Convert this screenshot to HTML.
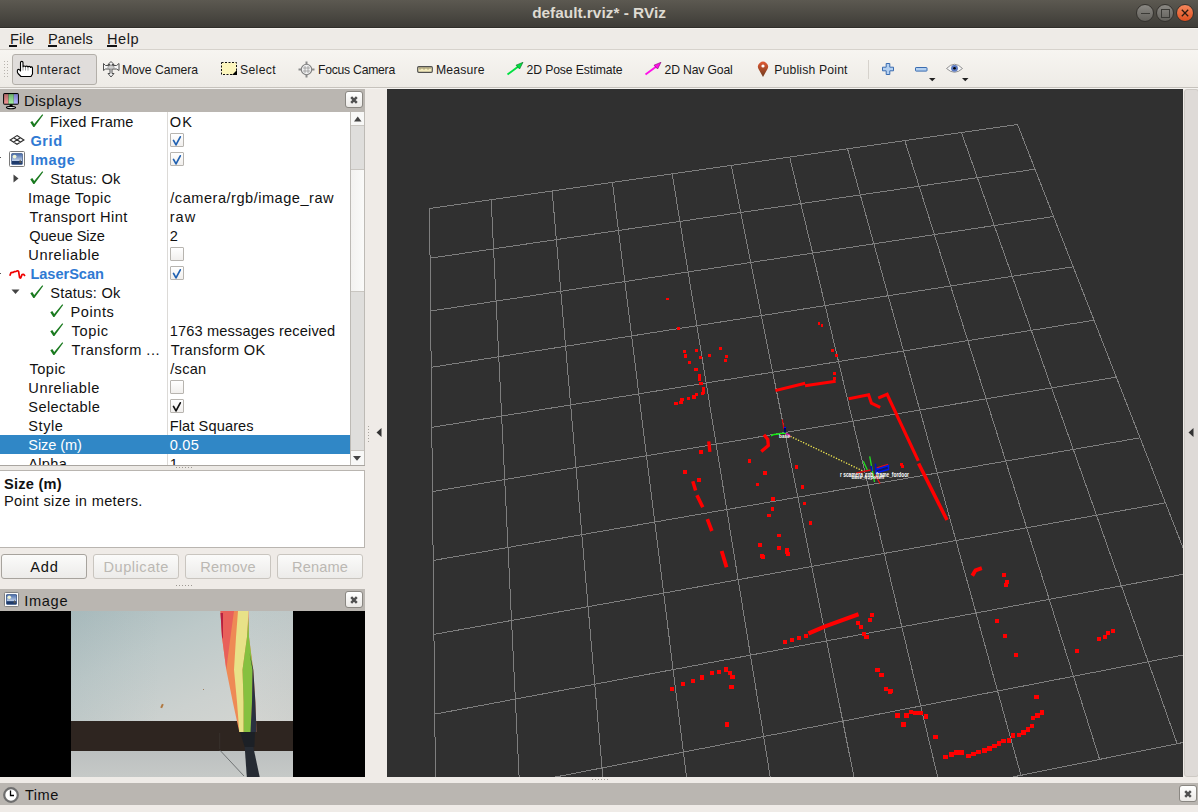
<!DOCTYPE html><html><head><meta charset="utf-8"><style>
*{box-sizing:border-box}
html,body{margin:0;padding:0}
body{width:1198px;height:812px;overflow:hidden;position:relative;background:#efebe7;font-family:"Liberation Sans", sans-serif;color:#111}
.a{position:absolute}
.t{position:absolute;white-space:nowrap;line-height:19px}
</style></head><body><div class="a" style="left:0;top:0;width:1198px;height:28px;background:linear-gradient(#5c5951,#3e3c37);border-bottom:1px solid #302e2a"></div>
<div class="t" style="left:0;top:4px;width:1198px;text-align:center;font-weight:bold;font-size:15.4px;color:#dfdbd2;line-height:18px">default.rviz* - RViz</div>
<div class="a" style="left:1136px;top:4px;width:18px;height:18px;border-radius:50%;background:linear-gradient(#8a8883,#62605b);border:1px solid #34322e"><div class="a" style="left:3.5px;top:7.5px;width:9px;height:1.5px;background:#3b3a36"></div></div>
<div class="a" style="left:1156px;top:4px;width:18px;height:18px;border-radius:50%;background:linear-gradient(#8a8883,#62605b);border:1px solid #34322e"><div class="a" style="left:3.5px;top:4px;width:9px;height:9px;border:1.5px solid #3b3a36"></div></div>
<div class="a" style="left:1176px;top:4px;width:18px;height:18px;border-radius:50%;background:linear-gradient(#f5875c,#df5020);border:1px solid #34322e"><svg class="a" style="left:0;top:0" width="16" height="16"><path d="M4.8 4.8L11.2 11.2M11.2 4.8L4.8 11.2" stroke="#2a1a10" stroke-width="1.3"/><circle cx="8" cy="8" r="1" fill="#2a1a10"/></svg></div>
<div class="a" style="left:0;top:28px;width:1198px;height:1px;background:#f7f4ef"></div>
<div class="a" style="left:0;top:29px;width:1198px;height:20px;background:#eeebe7"></div>
<div class="a" style="left:0;top:49px;width:1198px;height:1px;background:#d6d2cc"></div>
<div class="t" style="left:10px;top:30px;font-size:14.6px;letter-spacing:0.2px;line-height:19px;color:#1a1a1a">File</div>
<div class="t" style="left:48px;top:30px;font-size:14.6px;letter-spacing:0.05px;line-height:19px;color:#1a1a1a">Panels</div>
<div class="t" style="left:107px;top:30px;font-size:14.6px;letter-spacing:0.5px;line-height:19px;color:#1a1a1a">Help</div>
<div class="a" style="left:9px;top:45px;width:8px;height:2px;background:#111"></div>
<div class="a" style="left:48px;top:45px;width:9px;height:2px;background:#111"></div>
<div class="a" style="left:107px;top:45px;width:10px;height:2px;background:#111"></div>
<div class="a" style="left:0;top:50px;width:1198px;height:37px;background:linear-gradient(#f7f5f1,#eeebe6)"></div>
<div class="a" style="left:0;top:87px;width:1198px;height:1px;background:#c6c2bc"></div>
<div class="a" style="left:0;top:88px;width:1198px;height:1px;background:#f5f3f0"></div>
<div class="a" style="left:4px;top:61px;width:1px;height:1px;background:#b8b4ae"></div>
<div class="a" style="left:7px;top:61px;width:1px;height:1px;background:#b8b4ae"></div>
<div class="a" style="left:4px;top:64px;width:1px;height:1px;background:#b8b4ae"></div>
<div class="a" style="left:7px;top:64px;width:1px;height:1px;background:#b8b4ae"></div>
<div class="a" style="left:4px;top:67px;width:1px;height:1px;background:#b8b4ae"></div>
<div class="a" style="left:7px;top:67px;width:1px;height:1px;background:#b8b4ae"></div>
<div class="a" style="left:4px;top:70px;width:1px;height:1px;background:#b8b4ae"></div>
<div class="a" style="left:7px;top:70px;width:1px;height:1px;background:#b8b4ae"></div>
<div class="a" style="left:4px;top:73px;width:1px;height:1px;background:#b8b4ae"></div>
<div class="a" style="left:7px;top:73px;width:1px;height:1px;background:#b8b4ae"></div>
<div class="a" style="left:4px;top:76px;width:1px;height:1px;background:#b8b4ae"></div>
<div class="a" style="left:7px;top:76px;width:1px;height:1px;background:#b8b4ae"></div>
<div class="a" style="left:12px;top:54px;width:85px;height:31px;border:1px solid #b3afa9;border-radius:3px;background:#e0dddb"></div>
<div class="t" style="left:36.3px;top:61px;font-size:12.2px;letter-spacing:0.45px;line-height:19px;color:#1a1a1a">Interact</div>
<div class="t" style="left:122px;top:61px;font-size:12.2px;letter-spacing:-0.05px;line-height:19px;color:#1a1a1a">Move Camera</div>
<div class="t" style="left:240px;top:61px;font-size:12.2px;letter-spacing:0.34px;line-height:19px;color:#1a1a1a">Select</div>
<div class="t" style="left:318px;top:61px;font-size:12.2px;letter-spacing:-0.25px;line-height:19px;color:#1a1a1a">Focus Camera</div>
<div class="t" style="left:436px;top:61px;font-size:12.2px;letter-spacing:0.2px;line-height:19px;color:#1a1a1a">Measure</div>
<div class="t" style="left:526.5px;top:61px;font-size:12.2px;letter-spacing:-0.1px;line-height:19px;color:#1a1a1a">2D Pose Estimate</div>
<div class="t" style="left:664.5px;top:61px;font-size:12.2px;letter-spacing:-0.15px;line-height:19px;color:#1a1a1a">2D Nav Goal</div>
<div class="t" style="left:774.3px;top:61px;font-size:12.2px;letter-spacing:0.17px;line-height:19px;color:#1a1a1a">Publish Point</div>
<svg class="a" style="left:17px;top:61px;overflow:visible" width="17" height="17" viewBox="0 0 17 17" ><path d="M3.5 10V1.6C3.5 0 6 0 6 1.6V6C6 4.6 8.5 4.6 8.5 6C8.5 4.8 11 4.8 11 6.2C11 5 13.5 5 13.5 6.5C13.5 5.6 15.5 5.6 15.5 7V13L14 15.5H4L1 12.5C0.2 11.5 0 9 1 8.5C2 8 3 9 3.5 10Z" fill="#fff" stroke="#000" stroke-width="1.1" stroke-linejoin="round"/><path d="M6 6.5v3M8.5 6.5v3M11 6.8v2.8" stroke="#888" stroke-width="0.8"/></svg>
<svg class="a" style="left:103px;top:61px;overflow:visible" width="17" height="17" viewBox="0 0 17 17" ><path d="M8 0.5L11 3.5H9V4.5H13.5L16 2.5V9.5L13.5 8H9V12.5H11L8 16L5 12.5H7V8H2.5L0.5 9.5V2.5L2.5 4.5H7V3.5H5Z" fill="#f6f6f6" stroke="#505050" stroke-width="1" stroke-linejoin="round"/><ellipse cx="8" cy="6.3" rx="3.2" ry="1.9" fill="#cfcfcf" stroke="#888" stroke-width="0.7"/></svg>
<svg class="a" style="left:221px;top:62px;overflow:visible" width="16" height="13" viewBox="0 0 16 13" ><rect x="0.5" y="0.5" width="15" height="12" fill="#fdf6bd" stroke="#111" stroke-width="1" stroke-dasharray="2 1.5"/><path d="M16 8L16 13L11 13Z" fill="#000"/></svg>
<svg class="a" style="left:298px;top:61px;overflow:visible" width="17" height="17" viewBox="0 0 17 17" ><path d="M8.5 0.5V4M8.5 13V16.5M0.5 8.5H4M13 8.5H16.5" stroke="#8a8a8a" stroke-width="2"/><circle cx="8.5" cy="8.5" r="5.2" fill="#f0f0f0" stroke="#808080" stroke-width="1.1"/><path d="M5 7h7M5 10h7M7 5v7M10 5v7" stroke="#9a9a9a" stroke-width="0.8"/></svg>
<svg class="a" style="left:417px;top:66px;overflow:visible" width="16" height="7" viewBox="0 0 16 7" ><rect x="0.7" y="0.7" width="14.6" height="5.6" rx="1" fill="#f4ebbc" stroke="#505050" stroke-width="1.2"/><path d="M3 1.3v2.2M5 1.3v1.5M7 1.3v2.2M9 1.3v1.5M11 1.3v2.2M13 1.3v1.5" stroke="#5a5030" stroke-width="0.8"/></svg>
<svg class="a" style="left:506px;top:61px;overflow:visible" width="18" height="15" viewBox="0 0 18 15" ><path d="M1.5 13.5L13 5" stroke="#00e040" stroke-width="1.9"/><path d="M17 1.3L10 4.2L13.6 8Z" fill="#00e040" stroke="#086820" stroke-width="0.6"/></svg>
<svg class="a" style="left:644px;top:61px;overflow:visible" width="18" height="15" viewBox="0 0 18 15" ><path d="M1.5 13.5L13 5" stroke="#ff10e8" stroke-width="1.9"/><path d="M17 1.3L10 4.2L13.6 8Z" fill="#ff10e8" stroke="#800870" stroke-width="0.6"/></svg>
<svg class="a" style="left:757px;top:61px;overflow:visible" width="12" height="17" viewBox="0 0 12 17" ><defs><linearGradient id="pg" x1="0" y1="0" x2="0" y2="1"><stop offset="0" stop-color="#e05a35"/><stop offset="1" stop-color="#6e3a1c"/></linearGradient></defs><path d="M6 16L1.8 8.5A5 5 0 1 1 10.2 8.5Z" fill="url(#pg)"/><circle cx="6" cy="5" r="1.6" fill="#fff"/></svg>
<div class="a" style="left:868px;top:60px;width:1px;height:19px;background:#d6d2cc"></div>
<svg class="a" style="left:882px;top:63px;overflow:visible" width="12" height="12" viewBox="0 0 12 12" ><path d="M4.2 0.5H7.8V4.2H11.5V7.8H7.8V11.5H4.2V7.8H0.5V4.2H4.2Z" fill="#b4d0f0" stroke="#3a6cb0" stroke-width="1"/></svg>
<svg class="a" style="left:915px;top:66.5px;overflow:visible" width="12" height="5" viewBox="0 0 12 5" ><rect x="0.5" y="0.5" width="11.5" height="3.6" rx="0.6" fill="#b4d0f0" stroke="#3a6cb0" stroke-width="1"/></svg>
<svg class="a" style="left:929px;top:78px;overflow:visible" width="7" height="4" viewBox="0 0 7 4" ><path d="M0 0H6.5L3.25 3.2Z" fill="#222"/></svg>
<svg class="a" style="left:946px;top:63px;overflow:visible" width="17" height="11" viewBox="0 0 17 11" ><path d="M0.5 5.5Q8.5 -3 16.5 5.5Q8.5 13 0.5 5.5Z" fill="#f4f4f4" stroke="#888" stroke-width="0.9"/><circle cx="8.5" cy="5.3" r="3.4" fill="#5a78c0"/><circle cx="8.5" cy="5.3" r="1.3" fill="#000"/></svg>
<svg class="a" style="left:962px;top:78px;overflow:visible" width="7" height="4" viewBox="0 0 7 4" ><path d="M0 0H6.5L3.25 3.2Z" fill="#222"/></svg>
<div class="a" style="left:0;top:89px;width:365px;height:23px;background:#bab6b1"></div>
<div class="t" style="left:24px;top:92px;font-size:14.6px;letter-spacing:0.36px;color:#111">Displays</div>
<svg class="a" style="left:3px;top:92px;overflow:visible" width="17" height="18" viewBox="0 0 17 18" ><defs><linearGradient id="dr" x1="0" y1="0" x2="0" y2="1"><stop offset="0" stop-color="#b06868"/><stop offset="1" stop-color="#f29696"/></linearGradient><linearGradient id="dg" x1="0" y1="0" x2="0" y2="1"><stop offset="0" stop-color="#6cae6c"/><stop offset="1" stop-color="#a6f2a6"/></linearGradient><linearGradient id="db" x1="0" y1="0" x2="0" y2="1"><stop offset="0" stop-color="#7c7cc8"/><stop offset="1" stop-color="#b4b4ff"/></linearGradient></defs><rect x="0.1" y="1.1" width="15.8" height="11.6" rx="1.6" fill="#000"/><rect x="1.1" y="2.1" width="4.4" height="9.6" fill="url(#dr)"/><rect x="5.5" y="2.1" width="5.3" height="9.6" fill="url(#dg)"/><rect x="10.8" y="2.1" width="4.1" height="9.6" fill="url(#db)"/><path d="M6.9 12.5H9.3L9.9 14.4H6.3Z" fill="#000"/><ellipse cx="8" cy="15.6" rx="4.6" ry="1.2" fill="#eee" stroke="#000" stroke-width="1.1"/></svg>
<div class="a" style="left:345px;top:91px;width:18px;height:17px;border:1px solid #8a8782;border-radius:3px;background:linear-gradient(#ffffff,#ebe9e6)"></div>
<svg class="a" style="left:350px;top:96px;overflow:visible" width="8" height="8" viewBox="0 0 8 8" ><path d="M1.2 1.2L6.8 6.8M6.8 1.2L1.2 6.8" stroke="#505050" stroke-width="2.5" stroke-linecap="butt"/></svg>
<div class="a" style="left:0;top:112px;width:351px;height:353px;background:#fff"></div>
<div class="a" style="left:167px;top:112px;width:1px;height:353px;background:#dcdad7"></div>
<div class="a" style="left:0;top:465px;width:365px;height:1px;background:#a9a5a0"></div>
<div class="a" style="left:350px;top:112px;width:15px;height:353px;background:#dfdedc;border-left:1px solid #bdbab5;border-right:1px solid #bdbab5"></div>
<div class="a" style="left:351px;top:112px;width:13px;height:14px;background:#f8f8f7;border-bottom:1px solid #c9c6c1"></div>
<svg class="a" style="left:354px;top:116px;overflow:visible" width="8" height="6" viewBox="0 0 8 6" ><path d="M0 5.5H7.5L3.75 0.5Z" fill="#444"/></svg>
<div class="a" style="left:351px;top:169px;width:13px;height:123px;background:linear-gradient(90deg,#f3f2f0,#fafaf9);border-top:1px solid #c9c6c1;border-bottom:1px solid #c9c6c1"></div>
<div class="a" style="left:351px;top:450px;width:13px;height:15px;background:#f8f8f7;border-top:1px solid #c9c6c1"></div>
<svg class="a" style="left:353px;top:456px;overflow:visible" width="8" height="5" viewBox="0 0 8 5" ><path d="M0 0H8L4 4.8Z" fill="#444"/></svg>
<div class="a" style="left:0;top:435px;width:350px;height:19px;background:#3087c6"></div>
<svg class="a" style="left:30px;top:113.5px;overflow:visible" width="14" height="14" viewBox="0 0 14 14" ><path d="M0.3 8.3L2.3 7.1L4.2 9.9L12.3 0.3L13.2 0.9L4.4 12.9L3.3 12.9Z" fill="#1a7a1f"/></svg>
<div class="t" style="left:50px;top:113px;font-size:14.6px;letter-spacing:0.15px;color:#111">Fixed Frame</div>
<div class="t" style="left:169.7px;top:113px;font-size:14.6px;letter-spacing:1.1px;color:#111">OK</div>
<svg class="a" style="left:10px;top:135px;overflow:visible" width="15" height="11" viewBox="0 0 15 11" ><path d="M7 0.6L13.9 4.9L7 9.2L0.2 4.9Z M3.6 2.75L10.45 7.05 M10.45 2.75L3.6 7.05" fill="none" stroke="#303030" stroke-width="1.15"/></svg>
<div class="t" style="left:30.4px;top:132px;font-size:14.6px;font-weight:bold;letter-spacing:0.6px;color:#2f7ad3">Grid</div>
<div class="a" style="left:170px;top:133px;width:14px;height:14px;border:1px solid #b7b4af;border-radius:1px;background:linear-gradient(#ffffff,#f1efed)"></div>
<svg class="a" style="left:172px;top:134.5px;overflow:visible" width="10" height="11" viewBox="0 0 10 11" ><path d="M1.5 5.4L4 9.9L8.3 1.8" fill="none" stroke="#2262b2" stroke-width="1.7" stroke-linejoin="round" stroke-linecap="round"/></svg>
<svg class="a" style="left:9px;top:151px;overflow:visible" width="16" height="16" viewBox="0 0 16 16" ><defs><linearGradient id="sk" x1="0" y1="0" x2="0" y2="1"><stop offset="0" stop-color="#4a6ca8"/><stop offset="1" stop-color="#c4d4ec"/></linearGradient></defs><rect x="0.5" y="0.5" width="15" height="15" rx="1" fill="#fdfdfd" stroke="#7a7a7a" stroke-width="1"/><rect x="2.3" y="2.3" width="11.4" height="11.4" rx="1.2" fill="#24457c"/><rect x="3" y="3" width="10" height="7" fill="url(#sk)"/><circle cx="5.6" cy="5.6" r="1.9" fill="#fcffd8" opacity="0.9"/><path d="M3 10h10v2.6H3z" fill="#1e3a6a"/><path d="M10 12L11 8.2L13 12Z" fill="#555"/></svg>
<div class="t" style="left:30.4px;top:151px;font-size:14.6px;font-weight:bold;letter-spacing:0.55px;color:#2f7ad3">Image</div>
<div class="a" style="left:170px;top:152px;width:14px;height:14px;border:1px solid #b7b4af;border-radius:1px;background:linear-gradient(#ffffff,#f1efed)"></div>
<svg class="a" style="left:172px;top:153.5px;overflow:visible" width="10" height="11" viewBox="0 0 10 11" ><path d="M1.5 5.4L4 9.9L8.3 1.8" fill="none" stroke="#2262b2" stroke-width="1.7" stroke-linejoin="round" stroke-linecap="round"/></svg>
<svg class="a" style="left:13px;top:174px;overflow:visible" width="6" height="9" viewBox="0 0 6 9" ><path d="M0.5 0.5L5.5 4.5L0.5 8.5Z" fill="#444"/></svg>
<svg class="a" style="left:30px;top:170.5px;overflow:visible" width="14" height="14" viewBox="0 0 14 14" ><path d="M0.3 8.3L2.3 7.1L4.2 9.9L12.3 0.3L13.2 0.9L4.4 12.9L3.3 12.9Z" fill="#1a7a1f"/></svg>
<div class="t" style="left:50.3px;top:170px;font-size:14.6px;letter-spacing:0.2px;color:#111">Status: Ok</div>
<div class="t" style="left:27.9px;top:189px;font-size:14.6px;letter-spacing:0.47px;color:#111">Image Topic</div>
<div class="t" style="left:170.3px;top:189px;font-size:14.6px;letter-spacing:0.5px;color:#111">/camera/rgb/image_raw</div>
<div class="t" style="left:29.5px;top:208px;font-size:14.6px;letter-spacing:0.462px;color:#111">Transport Hint</div>
<div class="t" style="left:169.7px;top:208px;font-size:14.6px;letter-spacing:1.0px;color:#111">raw</div>
<div class="t" style="left:29.3px;top:227px;font-size:14.6px;letter-spacing:-0.078px;color:#111">Queue Size</div>
<div class="t" style="left:169.7px;top:227px;font-size:14.6px;color:#111">2</div>
<div class="t" style="left:28.3px;top:246px;font-size:14.6px;letter-spacing:0.6px;color:#111">Unreliable</div>
<div class="a" style="left:170px;top:247px;width:14px;height:14px;border:1px solid #b7b4af;border-radius:1px;background:linear-gradient(#ffffff,#f1efed)"></div>
<svg class="a" style="left:9px;top:264px;overflow:visible" width="17" height="17" viewBox="0 0 17 17" ><path d="M0.8 11.8L2 8.6L4 8.4L5.5 7.6L7.2 7.3L8.6 6.7L9.6 7.4L10.6 13.6L11.6 14.2L13 10.6L14.6 10.2L16 12" fill="none" stroke="#f00000" stroke-width="1.7" stroke-linejoin="bevel"/></svg>
<div class="t" style="left:30.4px;top:265px;font-size:14.6px;font-weight:bold;letter-spacing:-0.038px;color:#2f7ad3">LaserScan</div>
<div class="a" style="left:170px;top:266px;width:14px;height:14px;border:1px solid #b7b4af;border-radius:1px;background:linear-gradient(#ffffff,#f1efed)"></div>
<svg class="a" style="left:172px;top:267.5px;overflow:visible" width="10" height="11" viewBox="0 0 10 11" ><path d="M1.5 5.4L4 9.9L8.3 1.8" fill="none" stroke="#2262b2" stroke-width="1.7" stroke-linejoin="round" stroke-linecap="round"/></svg>
<svg class="a" style="left:11px;top:289px;overflow:visible" width="9" height="6" viewBox="0 0 9 6" ><path d="M0.5 0.5H8.5L4.5 5Z" fill="#444"/></svg>
<svg class="a" style="left:30px;top:284.5px;overflow:visible" width="14" height="14" viewBox="0 0 14 14" ><path d="M0.3 8.3L2.3 7.1L4.2 9.9L12.3 0.3L13.2 0.9L4.4 12.9L3.3 12.9Z" fill="#1a7a1f"/></svg>
<div class="t" style="left:50.3px;top:284px;font-size:14.6px;letter-spacing:0.2px;color:#111">Status: Ok</div>
<svg class="a" style="left:50px;top:303.5px;overflow:visible" width="14" height="14" viewBox="0 0 14 14" ><path d="M0.3 8.3L2.3 7.1L4.2 9.9L12.3 0.3L13.2 0.9L4.4 12.9L3.3 12.9Z" fill="#1a7a1f"/></svg>
<div class="t" style="left:70.6px;top:303px;font-size:14.6px;letter-spacing:0.52px;color:#111">Points</div>
<svg class="a" style="left:50px;top:322.5px;overflow:visible" width="14" height="14" viewBox="0 0 14 14" ><path d="M0.3 8.3L2.3 7.1L4.2 9.9L12.3 0.3L13.2 0.9L4.4 12.9L3.3 12.9Z" fill="#1a7a1f"/></svg>
<div class="t" style="left:71.6px;top:322px;font-size:14.6px;letter-spacing:0.6px;color:#111">Topic</div>
<div class="t" style="left:169.7px;top:322px;font-size:14.6px;letter-spacing:0.157px;color:#111">1763 messages received</div>
<svg class="a" style="left:50px;top:341.5px;overflow:visible" width="14" height="14" viewBox="0 0 14 14" ><path d="M0.3 8.3L2.3 7.1L4.2 9.9L12.3 0.3L13.2 0.9L4.4 12.9L3.3 12.9Z" fill="#1a7a1f"/></svg>
<div class="t" style="left:71.6px;top:341px;font-size:14.6px;letter-spacing:0.475px;color:#111">Transform ...</div>
<div class="t" style="left:170.7px;top:341px;font-size:14.6px;letter-spacing:0.318px;color:#111">Transform OK</div>
<div class="t" style="left:29.5px;top:360px;font-size:14.6px;letter-spacing:0.45px;color:#111">Topic</div>
<div class="t" style="left:170.3px;top:360px;font-size:14.6px;letter-spacing:0.25px;color:#111">/scan</div>
<div class="t" style="left:28.3px;top:379px;font-size:14.6px;letter-spacing:0.6px;color:#111">Unreliable</div>
<div class="a" style="left:170px;top:380px;width:14px;height:14px;border:1px solid #b7b4af;border-radius:1px;background:linear-gradient(#ffffff,#f1efed)"></div>
<div class="t" style="left:28.3px;top:398px;font-size:14.6px;letter-spacing:0.367px;color:#111">Selectable</div>
<div class="a" style="left:170px;top:399px;width:14px;height:14px;border:1px solid #b7b4af;border-radius:1px;background:linear-gradient(#ffffff,#f1efed)"></div>
<svg class="a" style="left:172px;top:400.5px;overflow:visible" width="10" height="11" viewBox="0 0 10 11" ><path d="M1.5 5.4L4 9.9L8.3 1.8" fill="none" stroke="#111" stroke-width="1.7" stroke-linejoin="round" stroke-linecap="round"/></svg>
<div class="t" style="left:28.3px;top:417px;font-size:14.6px;letter-spacing:0.525px;color:#111">Style</div>
<div class="t" style="left:169.7px;top:417px;font-size:14.6px;letter-spacing:0.109px;color:#111">Flat Squares</div>
<div class="t" style="left:28.3px;top:436px;font-size:14.6px;letter-spacing:-0.1px;color:#fff">Size (m)</div>
<div class="t" style="left:169.7px;top:436px;font-size:14.6px;letter-spacing:0.233px;color:#fff">0.05</div>
<div class="t" style="left:28.3px;top:455px;font-size:14.6px;letter-spacing:0.3px;color:#111">Alpha</div>
<div class="t" style="left:169.7px;top:455px;font-size:14.6px;color:#111">1</div>
<div class="a" style="left:0;top:157px;width:1px;height:1px;background:#555"></div>
<div class="a" style="left:0;top:273px;width:1px;height:1px;background:#555"></div>
<div class="a" style="left:0;top:465px;width:365px;height:1px;background:#a9a5a0"></div>
<div class="a" style="left:0;top:466px;width:365px;height:5px;background:#ece9e5"></div>
<div class="a" style="left:176px;top:467px;width:1px;height:1px;background:#9d9993"></div>
<div class="a" style="left:179px;top:467px;width:1px;height:1px;background:#9d9993"></div>
<div class="a" style="left:182px;top:467px;width:1px;height:1px;background:#9d9993"></div>
<div class="a" style="left:185px;top:467px;width:1px;height:1px;background:#9d9993"></div>
<div class="a" style="left:188px;top:467px;width:1px;height:1px;background:#9d9993"></div>
<div class="a" style="left:191px;top:467px;width:1px;height:1px;background:#9d9993"></div>
<div class="a" style="left:0;top:470px;width:365px;height:78px;background:#fff;border:1px solid #b9b5b0;border-left:none"></div>
<div class="t" style="left:4px;top:475px;font-size:14.6px;font-weight:bold;letter-spacing:0.25px;color:#111">Size (m)</div>
<div class="t" style="left:4px;top:492px;font-size:14.6px;letter-spacing:0.35px;color:#111">Point size in meters.</div>
<div class="a" style="left:1px;top:554px;width:86px;height:25px;border:1px solid #a7a39d;border-radius:3px;background:linear-gradient(#fbfbfa,#ecebe9)"></div>
<div class="t" style="left:1.4px;top:558px;width:86px;text-align:center;font-size:14.6px;letter-spacing:0.8px;color:#111">Add</div>
<div class="a" style="left:93px;top:554px;width:86px;height:25px;border:1px solid #c9c5bf;border-radius:3px;background:linear-gradient(#fbfbfa,#ecebe9)"></div>
<div class="t" style="left:93.25px;top:558px;width:86px;text-align:center;font-size:14.6px;letter-spacing:0.5px;color:#bbb8b3">Duplicate</div>
<div class="a" style="left:185px;top:554px;width:86px;height:25px;border:1px solid #c9c5bf;border-radius:3px;background:linear-gradient(#fbfbfa,#ecebe9)"></div>
<div class="t" style="left:185.1px;top:558px;width:86px;text-align:center;font-size:14.6px;letter-spacing:0.2px;color:#bbb8b3">Remove</div>
<div class="a" style="left:277px;top:554px;width:86px;height:25px;border:1px solid #c9c5bf;border-radius:3px;background:linear-gradient(#fbfbfa,#ecebe9)"></div>
<div class="t" style="left:277.06px;top:558px;width:86px;text-align:center;font-size:14.6px;letter-spacing:0.12px;color:#bbb8b3">Rename</div>
<div class="a" style="left:176px;top:585px;width:1px;height:1px;background:#9d9993"></div>
<div class="a" style="left:179px;top:585px;width:1px;height:1px;background:#9d9993"></div>
<div class="a" style="left:182px;top:585px;width:1px;height:1px;background:#9d9993"></div>
<div class="a" style="left:185px;top:585px;width:1px;height:1px;background:#9d9993"></div>
<div class="a" style="left:188px;top:585px;width:1px;height:1px;background:#9d9993"></div>
<div class="a" style="left:191px;top:585px;width:1px;height:1px;background:#9d9993"></div>
<div class="a" style="left:0;top:589px;width:365px;height:23px;background:#bab6b1"></div>
<div class="t" style="left:24.2px;top:592px;font-size:14.6px;letter-spacing:0.7px;color:#111">Image</div>
<svg class="a" style="left:4px;top:592px;overflow:visible" width="15" height="15" viewBox="0 0 15 15" ><g transform="scale(0.9375)"><defs><linearGradient id="sk2" x1="0" y1="0" x2="0" y2="1"><stop offset="0" stop-color="#4a6ca8"/><stop offset="1" stop-color="#c4d4ec"/></linearGradient></defs><rect x="0.5" y="0.5" width="15" height="15" rx="1" fill="#fdfdfd" stroke="#7a7a7a" stroke-width="1"/><rect x="2.3" y="2.3" width="11.4" height="11.4" rx="1.2" fill="#24457c"/><rect x="3" y="3" width="10" height="7" fill="url(#sk2)"/><circle cx="5.6" cy="5.6" r="1.9" fill="#fcffd8" opacity="0.9"/><path d="M3 10h10v2.6H3z" fill="#1e3a6a"/><path d="M10 12L11 8.2L13 12Z" fill="#555"/></g></svg>
<div class="a" style="left:345px;top:591px;width:18px;height:17px;border:1px solid #8a8782;border-radius:3px;background:linear-gradient(#ffffff,#ebe9e6)"></div>
<svg class="a" style="left:350px;top:596px;overflow:visible" width="8" height="8" viewBox="0 0 8 8" ><path d="M1.2 1.2L6.8 6.8M6.8 1.2L1.2 6.8" stroke="#505050" stroke-width="2.5" stroke-linecap="butt"/></svg>
<div class="a" style="left:0;top:611px;width:365px;height:166px;background:#000"></div>
<div class="a" style="left:71px;top:611px;width:222px;height:166px;overflow:hidden;background:#c4c9c9">
<div class="a" style="left:0;top:0;width:222px;height:110px;background:linear-gradient(155deg,#aabcbe 0%,#bdc9c9 35%,#ccd1cf 70%,#d5d6d2 100%)"></div><div class="a" style="left:0;top:0;width:222px;height:110px;background:linear-gradient(90deg,rgba(140,160,165,0.10),rgba(255,255,255,0) 40%,rgba(255,255,255,0) 80%,rgba(150,160,165,0.10))"></div><div class="a" style="left:90px;top:93px;width:2px;height:4px;background:#b07840;transform:rotate(25deg)"></div><div class="a" style="left:132px;top:78px;width:1px;height:1px;background:#a08060"></div>
<div class="a" style="left:0;top:110px;width:222px;height:30px;background:#2e2520"></div>
<div class="a" style="left:0;top:140px;width:222px;height:26px;background:linear-gradient(#bcc0c0,#c6c9c7)"></div>
<svg class="a" style="left:0;top:0" width="222" height="166">
<path d="M148.7 122V138" stroke="#3a3430" stroke-width="0.8"/>
<path d="M148.7 139L173 165" stroke="#5a5e60" stroke-width="0.8"/>
<path d="M149.5 0L177.5 0L178 26L182.3 58.7L184.4 91L185.5 121L168.3 121L161.8 91L155.3 58.7L151 26Z" fill="#ee8a55"/>
<path d="M149.5 0L163 0L160 22L157 45L155.3 58.7L151 26Z" fill="#e8605a"/>
<path d="M149.5 2L152 2L152 28L151 26Z" fill="#b82040"/>
<path d="M167 0L177.5 0L176 26L171.5 58.7L172.6 91L172.6 121L168.3 121L166 91L163 58.7L165 26Z" fill="#e8e288"/>
<path d="M177.5 6L178 26L182 58.7L181 91L180 121L172.6 121L172.6 91L171.5 58.7L176 26Z" fill="#86c040"/>
<path d="M178.5 42L182.3 58.7L184.4 91L185.5 121L179.5 121L181 91L181.5 58.7Z" fill="#2a3140"/>
<path d="M169 121H184L183.4 136H173.7Z" fill="#1c2026"/>
<path d="M173.7 136H182.3L188.7 166H175.8Z" fill="#262b33"/>
</svg></svg></div>
<div class="a" style="left:0;top:783px;width:1198px;height:22px;background:#bab6b1"></div>
<svg class="a" style="left:3px;top:787px;overflow:visible" width="16" height="16" viewBox="0 0 16 16" ><circle cx="8" cy="8" r="6.8" fill="#fff" stroke="#6e6e6e" stroke-width="2.2"/><path d="M7.5 3.5V8.5H11" fill="none" stroke="#000" stroke-width="1.3"/></svg>
<div class="t" style="left:25px;top:786px;font-size:14.6px;letter-spacing:0.5px;color:#111">Time</div>
<div class="a" style="left:1179px;top:785px;width:18px;height:17px;border:1px solid #8a8782;border-radius:3px;background:linear-gradient(#ffffff,#ebe9e6)"></div>
<svg class="a" style="left:1184px;top:790px;overflow:visible" width="8" height="8" viewBox="0 0 8 8" ><path d="M1.2 1.2L6.8 6.8M6.8 1.2L1.2 6.8" stroke="#505050" stroke-width="2.5" stroke-linecap="butt"/></svg>
<div class="a" style="left:592px;top:779px;width:1px;height:1px;background:#a09c96"></div>
<div class="a" style="left:595px;top:779px;width:1px;height:1px;background:#a09c96"></div>
<div class="a" style="left:598px;top:779px;width:1px;height:1px;background:#a09c96"></div>
<div class="a" style="left:601px;top:779px;width:1px;height:1px;background:#a09c96"></div>
<div class="a" style="left:604px;top:779px;width:1px;height:1px;background:#a09c96"></div>
<div class="a" style="left:607px;top:779px;width:1px;height:1px;background:#a09c96"></div>
<div class="a" style="left:1184px;top:89px;width:15px;height:688px;background:#dedad7;border:1px solid #cdc9c4;border-radius:3px"></div>
<svg class="a" style="left:1188px;top:428px;overflow:visible" width="6" height="9" viewBox="0 0 6 9" ><path d="M5.5 0V9L0.5 4.5Z" fill="#333"/></svg>
<svg class="a" style="left:376px;top:428px;overflow:visible" width="6" height="9" viewBox="0 0 6 9" ><path d="M5.5 0V9L0.5 4.5Z" fill="#333"/></svg>
<div class="a" style="left:368px;top:426px;width:1px;height:1px;background:#a9a59f"></div>
<div class="a" style="left:368px;top:429px;width:1px;height:1px;background:#a9a59f"></div>
<div class="a" style="left:368px;top:432px;width:1px;height:1px;background:#a9a59f"></div>
<div class="a" style="left:368px;top:435px;width:1px;height:1px;background:#a9a59f"></div>
<div class="a" style="left:368px;top:438px;width:1px;height:1px;background:#a9a59f"></div>
<div class="a" style="left:368px;top:441px;width:1px;height:1px;background:#a9a59f"></div>
<svg class="a" style="left:387px;top:89px;background:#303030" width="796" height="688">
<g stroke="#7e7e7e" stroke-width="1" shape-rendering="crispEdges"><line x1="42.53" y1="119.49" x2="630.54" y2="35.51"/><line x1="43.05" y1="169.21" x2="648.01" y2="80.19"/><line x1="43.60" y1="222.05" x2="666.52" y2="127.53"/><line x1="44.18" y1="278.33" x2="686.16" y2="177.77"/><line x1="44.80" y1="338.38" x2="707.04" y2="231.19"/><line x1="45.47" y1="402.61" x2="729.28" y2="288.09"/><line x1="46.18" y1="471.45" x2="753.03" y2="348.83"/><line x1="46.95" y1="545.42" x2="778.44" y2="413.82"/><line x1="47.77" y1="625.13" x2="805.68" y2="483.52"/><line x1="48.67" y1="711.27" x2="834.97" y2="558.44"/><line x1="49.63" y1="804.64" x2="866.55" y2="639.22"/><line x1="42.53" y1="119.49" x2="49.63" y2="804.64"/><line x1="104.17" y1="110.68" x2="136.91" y2="786.96"/><line x1="165.15" y1="101.97" x2="222.86" y2="769.56"/><line x1="225.48" y1="93.36" x2="307.53" y2="752.41"/><line x1="285.18" y1="84.83" x2="390.95" y2="735.52"/><line x1="344.25" y1="76.40" x2="473.14" y2="718.88"/><line x1="402.70" y1="68.05" x2="554.12" y2="702.48"/><line x1="460.55" y1="59.79" x2="633.93" y2="686.32"/><line x1="517.80" y1="51.61" x2="712.59" y2="670.39"/><line x1="574.46" y1="43.52" x2="790.12" y2="654.69"/><line x1="630.54" y1="35.51" x2="866.55" y2="639.22"/></g>
<g fill="#ff0000" shape-rendering="crispEdges"><rect x="279.4" y="208.6" width="2.8" height="2.8"/><rect x="289.9" y="238.3" width="2.9" height="2.9"/><rect x="296.0" y="260.7" width="3.0" height="3.0"/><rect x="296.5" y="265.4" width="3.1" height="3.1"/><rect x="308.1" y="260.2" width="3.0" height="3.0"/><rect x="312.0" y="266.5" width="3.1" height="3.1"/><rect x="320.5" y="264.5" width="3.0" height="3.0"/><rect x="332.2" y="257.5" width="3.0" height="3.0"/><rect x="338.2" y="266.2" width="3.1" height="3.1"/><rect x="336.8" y="269.7" width="3.1" height="3.1"/><rect x="300.8" y="271.5" width="3.1" height="3.1"/><rect x="307.4" y="279.1" width="3.1" height="3.1"/><rect x="310.5" y="284.7" width="3.1" height="3.1"/><rect x="310.5" y="288.4" width="3.1" height="3.1"/><rect x="312.3" y="292.8" width="3.2" height="3.2"/><rect x="315.2" y="298.0" width="3.2" height="3.2"/><rect x="315.2" y="301.4" width="3.2" height="3.2"/><rect x="314.0" y="303.2" width="3.2" height="3.2"/><rect x="308.0" y="304.1" width="3.2" height="3.2"/><rect x="305.4" y="306.4" width="3.2" height="3.2"/><rect x="300.2" y="307.8" width="3.2" height="3.2"/><rect x="293.3" y="309.2" width="3.2" height="3.2"/><rect x="292.4" y="311.8" width="3.2" height="3.2"/><rect x="287.3" y="313.2" width="3.2" height="3.2"/><rect x="430.5" y="232.6" width="2.9" height="2.9"/><rect x="433.5" y="235.2" width="2.9" height="2.9"/><rect x="444.3" y="259.8" width="3.0" height="3.0"/><rect x="448.2" y="264.8" width="3.0" height="3.0"/><rect x="445.5" y="282.5" width="3.1" height="3.1"/><rect x="445.5" y="287.7" width="3.1" height="3.1"/><rect x="312.1" y="361.3" width="3.4" height="3.4"/><rect x="296.0" y="381.2" width="3.5" height="3.5"/><rect x="310.1" y="389.0" width="3.5" height="3.5"/><rect x="361.0" y="370.3" width="3.4" height="3.4"/><rect x="376.4" y="382.2" width="3.5" height="3.5"/><rect x="368.8" y="393.9" width="3.5" height="3.5"/><rect x="407.8" y="376.3" width="3.5" height="3.5"/><rect x="384.0" y="408.1" width="3.6" height="3.6"/><rect x="383.6" y="418.0" width="3.6" height="3.6"/><rect x="380.2" y="424.5" width="3.7" height="3.7"/><rect x="390.4" y="444.5" width="3.7" height="3.7"/><rect x="371.1" y="454.0" width="3.8" height="3.8"/><rect x="390.0" y="457.3" width="3.8" height="3.8"/><rect x="397.9" y="460.9" width="3.8" height="3.8"/><rect x="372.7" y="465.2" width="3.8" height="3.8"/><rect x="413.6" y="396.1" width="3.5" height="3.5"/><rect x="415.7" y="412.6" width="3.6" height="3.6"/><rect x="421.7" y="432.4" width="3.7" height="3.7"/><rect x="512.8" y="373.8" width="3.5" height="3.5"/><rect x="513.8" y="375.8" width="3.5" height="3.5"/><rect x="389.8" y="457.0" width="3.8" height="3.8"/><rect x="397.7" y="459.0" width="3.8" height="3.8"/><rect x="399.3" y="462.9" width="3.8" height="3.8"/><rect x="374.1" y="465.9" width="3.8" height="3.8"/><rect x="469.0" y="531.8" width="4.1" height="4.1"/><rect x="471.6" y="535.8" width="4.1" height="4.1"/><rect x="474.5" y="542.6" width="4.1" height="4.1"/><rect x="477.4" y="545.5" width="4.1" height="4.1"/><rect x="483.4" y="524.3" width="4.0" height="4.0"/><rect x="480.5" y="528.9" width="4.1" height="4.1"/><rect x="488.3" y="578.5" width="4.2" height="4.2"/><rect x="492.2" y="584.0" width="4.3" height="4.3"/><rect x="497.0" y="598.1" width="4.3" height="4.3"/><rect x="501.0" y="600.3" width="4.3" height="4.3"/><rect x="282.7" y="597.8" width="4.3" height="4.3"/><rect x="294.1" y="592.7" width="4.3" height="4.3"/><rect x="303.9" y="589.9" width="4.3" height="4.3"/><rect x="313.0" y="586.4" width="4.3" height="4.3"/><rect x="322.9" y="581.6" width="4.3" height="4.3"/><rect x="329.8" y="580.5" width="4.3" height="4.3"/><rect x="337.1" y="578.3" width="4.2" height="4.2"/><rect x="340.5" y="581.6" width="4.3" height="4.3"/><rect x="343.4" y="585.5" width="4.3" height="4.3"/><rect x="342.2" y="595.7" width="4.3" height="4.3"/><rect x="337.8" y="633.4" width="4.5" height="4.5"/><rect x="614.9" y="484.3" width="3.9" height="3.9"/><rect x="617.8" y="490.9" width="3.9" height="3.9"/><rect x="617.3" y="493.9" width="3.9" height="3.9"/><rect x="608.3" y="529.9" width="4.1" height="4.1"/><rect x="616.0" y="544.5" width="4.1" height="4.1"/><rect x="626.7" y="564.1" width="4.2" height="4.2"/><rect x="687.9" y="559.6" width="4.2" height="4.2"/><rect x="709.6" y="547.5" width="4.1" height="4.1"/><rect x="715.6" y="545.7" width="4.1" height="4.1"/><rect x="718.9" y="542.0" width="4.1" height="4.1"/><rect x="724.3" y="540.1" width="4.1" height="4.1"/><rect x="496.5" y="598.1" width="4.3" height="4.3"/><rect x="501.3" y="600.1" width="4.3" height="4.3"/><rect x="508.1" y="624.1" width="4.4" height="4.4"/><rect x="517.1" y="624.1" width="4.4" height="4.4"/><rect x="521.9" y="620.8" width="4.4" height="4.4"/><rect x="526.4" y="621.8" width="4.4" height="4.4"/><rect x="531.1" y="621.6" width="4.4" height="4.4"/><rect x="536.6" y="625.3" width="4.4" height="4.4"/><rect x="514.1" y="633.1" width="4.5" height="4.5"/><rect x="546.4" y="645.6" width="4.5" height="4.5"/><rect x="556.4" y="665.8" width="4.6" height="4.6"/><rect x="562.1" y="663.1" width="4.6" height="4.6"/><rect x="567.0" y="661.1" width="4.6" height="4.6"/><rect x="572.3" y="661.1" width="4.6" height="4.6"/><rect x="579.3" y="664.6" width="4.6" height="4.6"/><rect x="584.3" y="662.8" width="4.6" height="4.6"/><rect x="589.4" y="660.8" width="4.6" height="4.6"/><rect x="595.1" y="659.0" width="4.5" height="4.5"/><rect x="600.4" y="657.1" width="4.5" height="4.5"/><rect x="605.2" y="654.8" width="4.5" height="4.5"/><rect x="609.8" y="652.3" width="4.5" height="4.5"/><rect x="614.3" y="649.8" width="4.5" height="4.5"/><rect x="619.9" y="649.2" width="4.5" height="4.5"/><rect x="623.5" y="644.1" width="4.5" height="4.5"/><rect x="629.5" y="643.6" width="4.5" height="4.5"/><rect x="634.0" y="641.4" width="4.5" height="4.5"/><rect x="638.8" y="638.4" width="4.5" height="4.5"/><rect x="642.8" y="634.9" width="4.5" height="4.5"/><rect x="643.8" y="626.7" width="4.4" height="4.4"/><rect x="648.3" y="624.4" width="4.4" height="4.4"/><rect x="652.6" y="621.4" width="4.4" height="4.4"/><rect x="647.4" y="606.1" width="4.3" height="4.3"/><rect x="395.6" y="550.9" width="4.1" height="4.1"/><rect x="402.5" y="548.9" width="4.1" height="4.1"/><rect x="409.8" y="546.9" width="4.1" height="4.1"/><rect x="417.2" y="544.6" width="4.1" height="4.1"/></g>
<g stroke="#ff0000" fill="none" stroke-linejoin="miter" stroke-linecap="square"><polyline points="389.9,301.2 416.7,294.7" stroke-width="3.03"/><polyline points="419.5,296.5 447.2,292.5" stroke-width="3.02"/><polyline points="463.2,309.5 481.6,305.8 484.4,314.1 491.8,317.8" stroke-width="3.09"/><polyline points="492.7,308.5 500.1,305.4 530.6,370.4" stroke-width="3.17"/><polyline points="532.4,376.0 559.2,429.5" stroke-width="3.50"/><polyline points="378.0,347.0 380.8,350.5 381.3,356.5 375.5,361.5" stroke-width="3.28"/><polyline points="586.3,485.0 588.5,481.3 593.0,479.8" stroke-width="3.86"/><polyline points="321.9,354.0 322.7,361.3" stroke-width="3.30"/><polyline points="423.3,543.7 438.1,537.4 469.6,526.0" stroke-width="4.10"/><polyline points="306.3,394.0 308.1,399.8" stroke-width="3.48"/><polyline points="310.7,407.8 315.0,416.6" stroke-width="3.55"/><polyline points="321.0,431.8 324.2,440.3" stroke-width="3.65"/><polyline points="335.2,463.8 339.0,476.4" stroke-width="3.81"/></g>

<polyline points="403.4,347.4 475.5,381.8" stroke="#f2e850" stroke-width="1.3" stroke-dasharray="1.3 1.5" fill="none"/>
<path d="M395.29999999999995 330.5L396.79999999999995 339.5" stroke="#e00000" stroke-width="1.2"/>
<path d="M398 338L398 343.8" stroke="#000068" stroke-width="2"/>
<path d="M398 338L398 339" stroke="#0010ff" stroke-width="2"/>
<path d="M384 346.8L387 345.5L392 345L393 344.3L398.5 344.3" stroke="#10ee10" stroke-width="1.3" fill="none"/>
<path d="M399 344.8L402 346L403 348" stroke="#e020b0" stroke-width="1.6" fill="none"/>
<text x="392" y="348.8" font-size="5.2" font-weight="bold" fill="#fff" font-family="Liberation Sans" textLength="11" lengthAdjust="spacingAndGlyphs">base</text>
<path d="M476.29999999999995 372.2L480.29999999999995 381M482.70000000000005 367.4L487.5 393" stroke="#20e020" stroke-width="1.3"/>
<path d="M469.1 384.2L483.5 381M488.29999999999995 379.4L501.1 375.4M488.29999999999995 385.9L493.1 394.7" stroke="#e01010" stroke-width="1.3"/>
<path d="M489 380.5L501.5 376.5L501.5 380.5L489 384Z" fill="#101868" stroke="#0018f0" stroke-width="1.4"/>
<path d="M488.29999999999995 374.6L489 381M484 377L485 382" stroke="#0010c0" stroke-width="1.6"/>
<text x="453" y="387.6" font-size="6.4" font-weight="bold" fill="#fff" font-family="Liberation Sans" textLength="69" lengthAdjust="spacingAndGlyphs">r scamera_rgb_frame_fordoor</text>
<text x="464.4" y="390.2" font-size="5.2" font-weight="bold" fill="#fff" font-family="Liberation Sans" textLength="33" lengthAdjust="spacingAndGlyphs">base_fr_poseff</text>

</svg></body></html>
